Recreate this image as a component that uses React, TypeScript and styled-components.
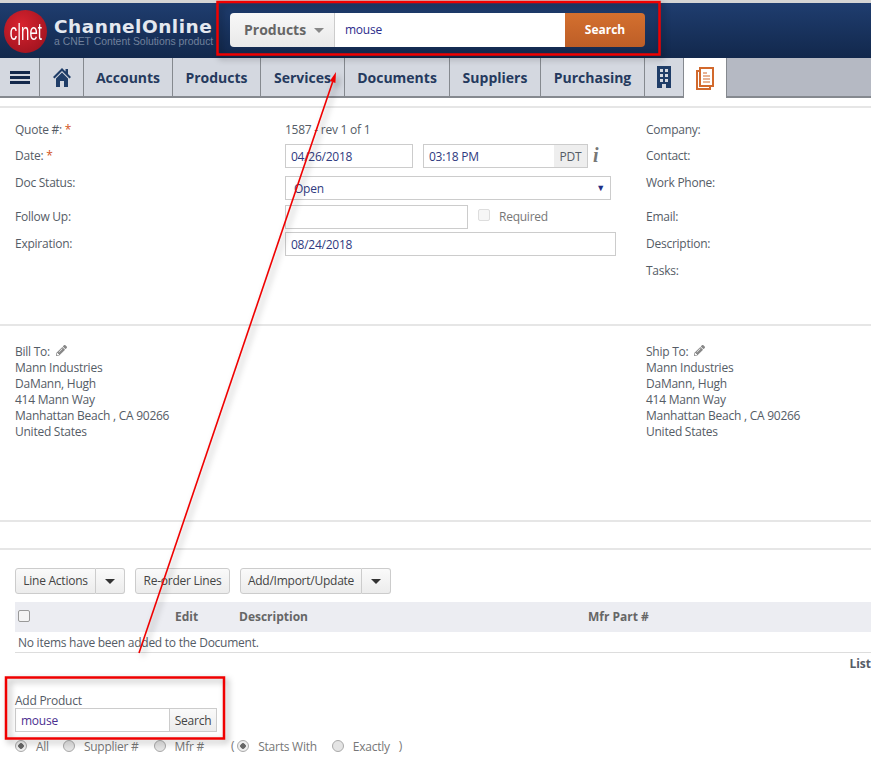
import styled, { createGlobalStyle } from "styled-components";
import { FaPencilAlt } from "react-icons/fa";

const GlobalStyle = createGlobalStyle`
  html, body {
    margin: 0;
    padding: 0;
    overflow: hidden;
    background: #fff;
  }
  * {
    box-sizing: border-box;
  }
`;

const NAV_ITEMS = [
  { label: "Accounts", width: 89 },
  { label: "Products", width: 88 },
  { label: "Services", width: 84 },
  { label: "Documents", width: 105 },
  { label: "Suppliers", width: 91 },
  { label: "Purchasing", width: 104 },
];

const ADDRESS = ["Mann Industries", "DaMann, Hugh", "414 Mann Way", "Manhattan Beach , CA 90266", "United States"];

const BarsIcon = () => (
  <svg width="20" height="13" viewBox="0 0 20 13" fill="#14294c">
    <path d="M0 0h20v3H0zM0 5h20v3H0zM0 10h20v3H0z" />
  </svg>
);

const HomeIcon = () => (
  <svg width="18" height="19" viewBox="0 0 18 19" fill="#1f3d68">
    <path d="M3 10.5 9 4.5l6 6V19h-4v-6H7v6H3z" />
    <path d="M0 9 9 0l3.5 3.5V1H15v5l3 3-1.5 1.5L9 3 1.5 10.5z" />
  </svg>
);

const BuildingIcon = () => (
  <svg width="14" height="22" viewBox="0 0 14 22" fill="#1f3d68" fillRule="evenodd">
    <path d="M0 0h14v22H9v-4H5v4H0zM3 3v3h3V3zM8 3v3h3V3zM3 8v3h3V8zM8 8v3h3V8zM3 13v3h3v-3zM8 13v3h3v-3z" />
  </svg>
);

const DocIcon = () => (
  <svg width="18" height="23" viewBox="0 0 18 23" fill="none" stroke="#d2692d" strokeWidth="2">
    <path d="M4 1h13v18H4z" />
    <path d="M4 4H1v18h13v-3" />
    <path d="M7 6h4M7 9h7M7 12h7M7 15h7" strokeWidth="1.2" />
  </svg>
);

const App = () => (
  <Page>
    <GlobalStyle />
    <Header>
      <Logo>
        <LogoDisc>
          <LogoMark>c|net</LogoMark>
        </LogoDisc>
        <LogoText>
          <LogoName>ChannelOnline</LogoName>
          <LogoTag>a CNET Content Solutions product</LogoTag>
        </LogoText>
      </Logo>
      <SearchBar>
        <SearchScope>
          Products <Caret />
        </SearchScope>
        <SearchField>mouse</SearchField>
        <SearchButton>Search</SearchButton>
      </SearchBar>
    </Header>

    <Nav>
      <NavCell $width={40}>
        <BarsIcon />
      </NavCell>
      <NavCell $width={44}>
        <HomeIcon />
      </NavCell>
      {NAV_ITEMS.map((item) => (
        <NavCell key={item.label} $width={item.width}>
          {item.label}
        </NavCell>
      ))}
      <NavCell $width={39}>
        <BuildingIcon />
      </NavCell>
      <NavCell $width={43} $active>
        <DocIcon />
      </NavCell>
      <NavFiller />
    </Nav>

    <FormSection>
      <FormGrid>
        <Label>
          Quote #: <Required>*</Required>
        </Label>
        <Label>1587 - rev 1 of 1</Label>
        <Label>Company:</Label>

        <Label>
          Date: <Required>*</Required>
        </Label>
        <InputRow>
          <Input $width={128}>04/26/2018</Input>
          <TimeGroup>
            <TimeValue>03:18 PM</TimeValue>
            <Zone>PDT</Zone>
          </TimeGroup>
          <InfoMark>i</InfoMark>
        </InputRow>
        <Label>Contact:</Label>

        <Label>Doc Status:</Label>
        <Select>
          Open
          <SelectArrow>▼</SelectArrow>
        </Select>
        <Label>Work Phone:</Label>

        <Label>Follow Up:</Label>
        <InputRow>
          <Input $width={183} />
          <FakeCheck />
          <CheckLabel>Required</CheckLabel>
        </InputRow>
        <Label>Email:</Label>

        <Label>Expiration:</Label>
        <InputRow>
          <Input $width={331}>08/24/2018</Input>
        </InputRow>
        <Label>Description:</Label>

        <span />
        <span />
        <Label>Tasks:</Label>
      </FormGrid>
    </FormSection>

    <AddressSection>
      <AddressBlock>
        <div>
          Bill To: <PencilMark><FaPencilAlt size={11} /></PencilMark>
        </div>
        {ADDRESS.map((line) => (
          <div key={line}>{line}</div>
        ))}
      </AddressBlock>
      <AddressBlock>
        <div>
          Ship To: <PencilMark><FaPencilAlt size={11} /></PencilMark>
        </div>
        {ADDRESS.map((line) => (
          <div key={line}>{line}</div>
        ))}
      </AddressBlock>
    </AddressSection>

    <Spacer />

    <LinesSection>
      <Toolbar>
        <ButtonGroup>
          <ToolButton $width={81}>Line Actions</ToolButton>
          <ToolCaret>
            <Caret $dark />
          </ToolCaret>
        </ButtonGroup>
        <ToolButton $width={95} $alone>
          Re-order Lines
        </ToolButton>
        <ButtonGroup>
          <ToolButton $width={122}>Add/Import/Update</ToolButton>
          <ToolCaret>
            <Caret $dark />
          </ToolCaret>
        </ButtonGroup>
      </Toolbar>

      <TableHead>
        <HeadCheck />
        <HeadCell $width={64}>Edit</HeadCell>
        <HeadCell $width={349}>Description</HeadCell>
        <HeadCell $width={120}>Mfr Part #</HeadCell>
      </TableHead>
      <EmptyRow>No items have been added to the Document.</EmptyRow>
      <ListLabel>List</ListLabel>

      <AddProduct>
        <AddLabel>Add Product</AddLabel>
        <AddRow>
          <AddInput>mouse</AddInput>
          <AddButton>Search</AddButton>
        </AddRow>
      </AddProduct>

      <RadioRow>
        <Radio $on />
        <RadioText $gap={14}>All</RadioText>
        <Radio />
        <RadioText $gap={15}>Supplier #</RadioText>
        <Radio />
        <RadioText $gap={27}>Mfr #</RadioText>
        <Paren>(</Paren>
        <Radio $on />
        <RadioText $gap={15}>Starts With</RadioText>
        <Radio />
        <RadioText $gap={9}>Exactly</RadioText>
        <Paren>)</Paren>
      </RadioRow>
    </LinesSection>

    <Notes viewBox="0 0 871 777" width="871" height="777">
      <rect x="217.5" y="2" width="442" height="52.5" fill="none" stroke="#f00000" strokeWidth="2.5" />
      <rect x="6" y="677.5" width="218" height="61" fill="none" stroke="#f00000" strokeWidth="2.5" />
      <line x1="139" y1="653" x2="332.6" y2="82" stroke="#f00000" strokeWidth="1.6" />
      <path d="M336 72 L335.4 83 L329.8 81 Z" fill="#f00000" />
    </Notes>
  </Page>
);

export default App;

const Page = styled.div`
  position: relative;
  width: 871px;
  height: 777px;
  overflow: hidden;
  font-family: "Open Sans", "Noto Sans", sans-serif;
  font-size: 12px;
  line-height: 16px;
  letter-spacing: -0.25px;
  color: #555c66;
`;

const Header = styled.header`
  display: flex;
  align-items: flex-start;
  height: 58px;
  padding: 10px 0 0 4px;
  border-top: 3px solid #d5d5d5;
  background: linear-gradient(#1f3d6f, #12284c);
  letter-spacing: 0;
`;

const Logo = styled.div`
  display: flex;
  align-items: flex-start;
  width: 226px;
  margin-top: -3px;
`;

const LogoDisc = styled.div`
  display: flex;
  flex: none;
  align-items: center;
  justify-content: center;
  width: 43px;
  height: 43px;
  border-radius: 50%;
  background: radial-gradient(circle at 40% 35%, #d8232f, #95101c);
  color: #fff;
`;

const LogoMark = styled.span`
  font-family: "Liberation Sans", sans-serif;
  font-size: 24px;
  transform: scaleX(0.62);
`;

const LogoText = styled.div`
  margin: 8px 0 0 7px;
`;

const LogoName = styled.div`
  font-family: "DejaVu Sans", sans-serif;
  font-size: 18.5px;
  font-weight: 700;
  line-height: 18px;
  letter-spacing: 0.5px;
  color: #e4e8ef;
`;

const LogoTag = styled.div`
  font-family: "Liberation Sans", sans-serif;
  font-size: 10.4px;
  line-height: 11px;
  color: #71819c;
  white-space: nowrap;
`;

const SearchBar = styled.div`
  display: flex;
  height: 34px;
  width: 415px;
`;

const SearchScope = styled.div`
  display: flex;
  align-items: center;
  gap: 8px;
  width: 105px;
  padding-left: 14px;
  border-right: 1px solid #ccc;
  border-radius: 4px 0 0 4px;
  background: linear-gradient(#f8f8f8, #e9e9e9);
  font-size: 14px;
  font-weight: 700;
  color: #666;
`;

const SearchField = styled.div`
  display: flex;
  flex: 1;
  align-items: center;
  padding-left: 10px;
  background: #fff;
  color: #2c2c8c;
  letter-spacing: -0.25px;
`;

const SearchButton = styled.div`
  display: flex;
  align-items: center;
  justify-content: center;
  width: 80px;
  border-radius: 0 4px 4px 0;
  background: linear-gradient(#d4702f, #bd5e27);
  font-size: 12px;
  font-weight: 700;
  color: #fff;
`;

const Caret = styled.span<{ $dark?: boolean }>`
  display: inline-block;
  border-style: solid;
  border-width: 5px 5px 0;
  border-color: ${(p) => (p.$dark ? "#333" : "#888")} transparent transparent;
`;

const Nav = styled.nav`
  display: flex;
  height: 40px;
  letter-spacing: 0;
`;

const NavCell = styled.div<{ $width: number; $active?: boolean }>`
  display: flex;
  flex: none;
  align-items: center;
  justify-content: center;
  width: ${(p) => p.$width}px;
  padding-top: 2px;
  border-right: 1px solid #85898f;
  border-bottom: ${(p) => (p.$active ? "none" : "2px solid #85898f")};
  background: ${(p) => (p.$active ? "#fff" : "#d4d8e0")};
  font-size: 14px;
  font-weight: 700;
  color: #253a5e;

  svg {
    margin-top: -2px;
  }
`;

const NavFiller = styled.div`
  flex: 1;
  border-bottom: 2px solid #85898f;
  background: #b5b9c3;
`;

const FormSection = styled.section`
  height: 218px;
  margin-top: 8px;
  padding-top: 9px;
  border-top: 2px solid #e6e6e6;
`;

const FormGrid = styled.div`
  display: grid;
  grid-template-columns: 270px 361px 1fr;
  grid-template-rows: 26px 27px 34px 27px 27px 27px;
  padding-left: 15px;
`;

const Label = styled.div`
  padding-top: 5px;
`;

const Required = styled.span`
  color: #d2531c;
`;

const InputRow = styled.div`
  display: flex;
  align-items: flex-start;
  padding-top: 1px;
`;

const Input = styled.div<{ $width: number }>`
  width: ${(p) => p.$width}px;
  height: 24px;
  padding: 4px 5px;
  border: 1px solid #ccc;
  color: #2f3a80;
`;

const TimeGroup = styled.div`
  display: flex;
  width: 165px;
  height: 24px;
  margin-left: 10px;
  border: 1px solid #ccc;
`;

const TimeValue = styled.div`
  flex: 1;
  padding: 4px 5px;
  color: #2f3a80;
`;

const Zone = styled.div`
  width: 33px;
  padding-top: 4px;
  background: #eee;
  text-align: center;
`;

const InfoMark = styled.span`
  margin: 3px 0 0 5px;
  font-family: "Liberation Serif", serif;
  font-size: 20px;
  font-style: italic;
  font-weight: 700;
  color: #777;
`;

const Select = styled.div`
  position: relative;
  width: 326px;
  height: 24px;
  margin-top: 6px;
  padding: 4px 8px;
  border: 1px solid #ccc;
  color: #2f3a80;
`;

const SelectArrow = styled.span`
  position: absolute;
  top: 3px;
  right: 5px;
  font-size: 9px;
  color: #1f2f86;
`;

const FakeCheck = styled.span`
  width: 12px;
  height: 12px;
  margin: 4px 0 0 10px;
  border: 1px solid #ddd;
  border-radius: 2px;
  background: #f6f6f6;
`;

const CheckLabel = styled.span`
  margin: 4px 0 0 9px;
  color: #777;
`;

const AddressSection = styled.section`
  display: grid;
  grid-template-columns: 631px 1fr;
  height: 196px;
  padding: 18px 0 0 15px;
  border-top: 2px solid #e6e6e6;
`;

const AddressBlock = styled.div`
  color: #555c66;
`;

const PencilMark = styled.span`
  margin-left: 3px;
  color: #888;
`;

const Spacer = styled.div`
  height: 28px;
  border-top: 2px solid #e6e6e6;
`;

const LinesSection = styled.section`
  padding: 18px 0 0 15px;
  border-top: 2px solid #e6e6e6;
`;

const Toolbar = styled.div`
  display: flex;
  gap: 10px;
  height: 26px;
`;

const ButtonGroup = styled.div`
  display: flex;
`;

const ToolButton = styled.div<{ $width: number; $alone?: boolean }>`
  display: flex;
  align-items: center;
  justify-content: center;
  width: ${(p) => p.$width}px;
  border: 1px solid #ccc;
  border-radius: ${(p) => (p.$alone ? "3px" : "3px 0 0 3px")};
  background: linear-gradient(#fafafa, #ececec);
  color: #444;
`;

const ToolCaret = styled.div`
  display: flex;
  align-items: center;
  justify-content: center;
  width: 29px;
  border: 1px solid #ccc;
  border-left: none;
  border-radius: 0 3px 3px 0;
  background: linear-gradient(#fafafa, #ececec);
`;

const TableHead = styled.div`
  display: flex;
  align-items: center;
  height: 30px;
  margin-top: 8px;
  padding-left: 3px;
  background: #ecedf2;
  font-weight: 700;
  letter-spacing: 0;
  color: #666;
`;

const HeadCheck = styled.span`
  width: 12px;
  height: 12px;
  margin: -3px 145px 0 0;
  border: 1px solid #999;
  border-radius: 2px;
  background: #f4f4f4;
`;

const HeadCell = styled.div<{ $width: number }>`
  flex: none;
  width: ${(p) => p.$width}px;
`;

const EmptyRow = styled.div`
  height: 21px;
  padding: 3px 0 0 3px;
  border-bottom: 1px solid #ddd;
`;

const ListLabel = styled.div`
  margin-top: 3px;
  text-align: right;
  font-weight: 700;
  letter-spacing: 0;
`;

const AddProduct = styled.div`
  margin-top: 21px;
`;

const AddLabel = styled.div`
  height: 15px;
`;

const AddRow = styled.div`
  display: flex;
  height: 24px;
`;

const AddInput = styled.div`
  width: 155px;
  padding: 4px 5px;
  border: 1px solid #ccc;
  color: #4b2f90;
`;

const AddButton = styled.div`
  width: 47px;
  padding-top: 4px;
  border: 1px solid #ccc;
  border-left: none;
  background: linear-gradient(#fafafa, #ececec);
  text-align: center;
  color: #444;
`;

const RadioRow = styled.div`
  display: flex;
  align-items: center;
  height: 20px;
  margin-top: 5px;
`;

const Radio = styled.span<{ $on?: boolean }>`
  flex: none;
  width: 12px;
  height: 12px;
  margin: -3px 0 0 0;
  border: 1px solid #aaa;
  border-radius: 50%;
  background: ${(p) =>
    p.$on ? "radial-gradient(circle, #666 0 2.5px, #eee 3px)" : "#e4e4e4"};
`;

const RadioText = styled.span<{ $gap: number }>`
  margin: 0 ${(p) => p.$gap}px 0 9px;
  color: #777;
`;

const Paren = styled.span`
  margin: -3px 3px 0 0;
  color: #777;
`;

const Notes = styled.svg`
  position: absolute;
  top: 0;
  left: 0;
  filter: drop-shadow(3px 3px 3px rgba(0, 0, 0, 0.35));
  pointer-events: none;
`;
